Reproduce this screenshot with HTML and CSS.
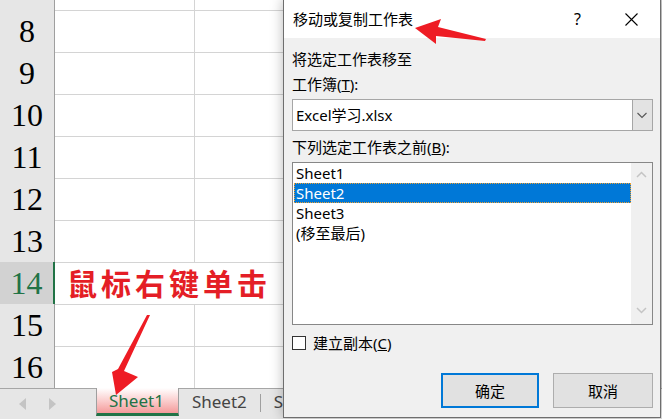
FILE: index.html
```html
<!DOCTYPE html>
<html lang="zh-CN">
<head>
<meta charset="utf-8">
<title>移动或复制工作表</title>
<link rel="stylesheet" href="styles.css">
</head>
<body>
<div class="sheet">
  <div class="grid">
    <div class="row"><div class="rh">7</div><div class="cell"></div><div class="cell"></div></div>
    <div class="row"><div class="rh">8</div><div class="cell"></div><div class="cell"></div></div>
    <div class="row"><div class="rh">9</div><div class="cell"></div><div class="cell"></div></div>
    <div class="row"><div class="rh">10</div><div class="cell"></div><div class="cell"></div></div>
    <div class="row"><div class="rh">11</div><div class="cell"></div><div class="cell"></div></div>
    <div class="row"><div class="rh">12</div><div class="cell"></div><div class="cell"></div></div>
    <div class="row"><div class="rh">13</div><div class="cell"></div><div class="cell"></div></div>
    <div class="row sel"><div class="rh">14</div><div class="cell span"><span class="note">鼠标右键单击</span></div></div>
    <div class="row"><div class="rh">15</div><div class="cell"></div><div class="cell"></div></div>
    <div class="row"><div class="rh">16</div><div class="cell"></div><div class="cell"></div></div>
  </div>
  <div class="tabbar">
    <div class="nav">
      <svg width="8" height="12" viewBox="0 0 8 12"><polygon points="7,0 7,12 0,6" fill="#c4c4c4"/></svg>
      <svg width="8" height="12" viewBox="0 0 8 12"><polygon points="1,0 1,12 8,6" fill="#c4c4c4"/></svg>
    </div>
    <div class="tab active">Sheet1</div>
    <div class="tab">Sheet2</div>
    <div class="sep"></div>
    <div class="tab">Sheet3</div>
  </div>
</div>

<div class="dialog">
  <div class="titlebar">
    <span class="title">移动或复制工作表</span>
    <span class="help">?</span>
    <svg class="close" width="13" height="13" viewBox="0 0 13 13"><path d="M0.5 0.5 L12.5 12.5 M12.5 0.5 L0.5 12.5" stroke="#000" stroke-width="1.1" fill="none"/></svg>
  </div>
  <div class="dbody">
    <div class="label l1">将选定工作表移至</div>
    <div class="label l2">工作簿(<u>T</u>):</div>
    <div class="combo">
      <span class="combo-text">Excel学习.xlsx</span>
      <span class="combo-btn"><svg width="18" height="30" viewBox="0 0 18 30"><polyline points="4.5,13 9,17.5 13.5,13" stroke="#555" stroke-width="1.1" fill="none"/></svg></span>
    </div>
    <div class="label l3">下列选定工作表之前(<u>B</u>):</div>
    <div class="list">
      <div class="items">
        <div class="item">Sheet1</div>
        <div class="item selected">Sheet2</div>
        <div class="item">Sheet3</div>
        <div class="item">(移至最后)</div>
      </div>
      <div class="vscroll">
        <svg width="21" height="20" viewBox="0 0 21 20"><polyline points="6,13 10.5,8.5 15,13" stroke="#c4c4c4" stroke-width="1.5" fill="none"/></svg>
        <svg width="21" height="20" viewBox="0 0 21 20"><polyline points="6,7 10.5,11.5 15,7" stroke="#c4c4c4" stroke-width="1.5" fill="none"/></svg>
      </div>
    </div>
    <div class="check-row">
      <span class="checkbox"></span>
      <span>建立副本(<u>C</u>)</span>
    </div>
    <div class="buttons">
      <div class="btn primary">确定</div>
      <div class="btn">取消</div>
    </div>
  </div>
</div>

<svg class="arrows" width="662" height="419" viewBox="0 0 662 419">
  <polygon points="415,28 441,19 438,27 486,39 485,41 436,36 436,44" fill="#ee1c24"/>
  <polygon points="150,315 124,371 138,377 116,395 112,372 118,369 147,315" fill="#ee1c24"/>
</svg>
</body>
</html>
```

FILE: styles.css
```css
* { box-sizing: border-box; }
html, body { margin: 0; padding: 0; }
body {
  width: 662px;
  height: 419px;
  overflow: hidden;
  position: relative;
  background: #fff;
  font-family: "Noto Sans", "Noto Sans CJK SC", sans-serif;
}

.sheet { display: flex; flex-direction: column; height: 419px; }
.grid { margin-top: -32px; }
.row {
  display: grid;
  grid-template-columns: 55px 140px 1fr;
  height: 42px;
}
.rh {
  background: #e6e6e6;
  border-right: 1px solid #9f9f9f;
  border-bottom: 1px solid #bdbdbd;
  font: 32px/42px "Liberation Serif", serif;
  text-align: center;
  color: #000;
}
.cell {
  border-right: 1px solid #d4d4d4;
  border-bottom: 1px solid #d4d4d4;
}
.cell.span { grid-column: 2 / 4; }
.row.sel .rh {
  background: #d2d2d2;
  color: #217346;
  border-right: 2px solid #217346;
}
.note {
  display: block;
  color: #e41e26;
  font: 700 30px/40px "Noto Sans CJK SC", sans-serif;
  letter-spacing: 4px;
  padding-left: 12px;
  white-space: nowrap;
}

.tabbar {
  flex: 1;
  display: flex;
  align-items: flex-start;
  background: #e6e6e6;
  border-top: 1px solid #a6a6a6;
}
.nav {
  width: 96px;
  height: 30px;
  display: flex;
  align-items: center;
  gap: 21px;
  padding-left: 19px;
}
.tab {
  height: 26px;
  padding: 0 13px;
  font-size: 17px;
  line-height: 26px;
  color: #444;
}
.tab.active {
  margin-top: -1px;
  height: 28px;
  padding: 0 14px 0 12px;
  background: linear-gradient(#ffffff 0%, #fbd3d3 45%, #f49a9a 100%);
  color: #217346;
  border-left: 1px solid #9f9f9f;
  border-right: 1px solid #9f9f9f;
  border-bottom: 3px solid #217346;
}
.sep {
  width: 1px;
  height: 18px;
  margin-top: 5px;
  background: #9f9f9f;
}

.dialog {
  position: absolute;
  left: 283px;
  top: -1px;
  width: 378px;
  height: 419px;
  border: 1px solid #6e6e6e;
  background: #f0f0f0;
  box-shadow: 0 0 12px rgba(0, 0, 0, 0.28);
  display: flex;
  flex-direction: column;
  font-size: 15px;
  color: #000;
}
.titlebar {
  height: 38px;
  flex: 0 0 38px;
  background: #fff;
  display: flex;
  align-items: center;
  padding-left: 9px;
  line-height: 20px;
}
.title { flex: 1; }
.help { width: 10px; margin-right: 41px; font-size: 16px; }
.close { margin-right: 22px; }

.dbody {
  display: flex;
  flex-direction: column;
  padding: 0 7px 0 8px;
}
.label { line-height: 20px; height: 20px; }
.l1 { margin-top: 11px; }
.l2 { margin-top: 5px; }
.l3 { margin-top: 6px; }

.combo {
  margin-top: 5px;
  height: 32px;
  border: 1px solid #a6a6a6;
  background: #fff;
  display: flex;
}
.combo-text { flex: 1; padding-left: 3px; line-height: 30px; }
.combo-btn {
  width: 20px;
  background: #e3e3e3;
  border-left: 1px solid #a6a6a6;
}
.combo-btn svg { display: block; }

.list {
  margin-top: 5px;
  height: 163px;
  border: 1px solid #878787;
  background: #fff;
  display: flex;
}
.items { flex: 1; padding-left: 1px; }
.item {
  height: 20px;
  line-height: 20px;
  padding-left: 2px;
}
.item.selected {
  background: #0078d7;
  color: #fff;
  outline: 1px dotted #f0a030;
  outline-offset: -1px;
  padding-left: 2px;
}
.vscroll {
  width: 21px;
  background: #f0f0f0;
  display: flex;
  flex-direction: column;
  justify-content: space-between;
  padding: 1px 0 3px;
}
.vscroll svg { display: block; }

.check-row {
  margin-top: 8px;
  height: 20px;
  display: flex;
  align-items: center;
  gap: 7px;
  line-height: 20px;
}
.checkbox {
  width: 14px;
  height: 14px;
  border: 1px solid #333;
  background: #fff;
}

.buttons {
  margin-top: 20px;
  display: flex;
  justify-content: flex-end;
  gap: 14px;
}
.btn {
  width: 100px;
  height: 35px;
  border: 1px solid #adadad;
  background: #e1e1e1;
  display: flex;
  align-items: center;
  justify-content: center;
}
.btn.primary {
  width: 98px;
  border: 2px solid #0078d7;
}

.arrows {
  position: absolute;
  left: 0;
  top: 0;
  pointer-events: none;
}
```
